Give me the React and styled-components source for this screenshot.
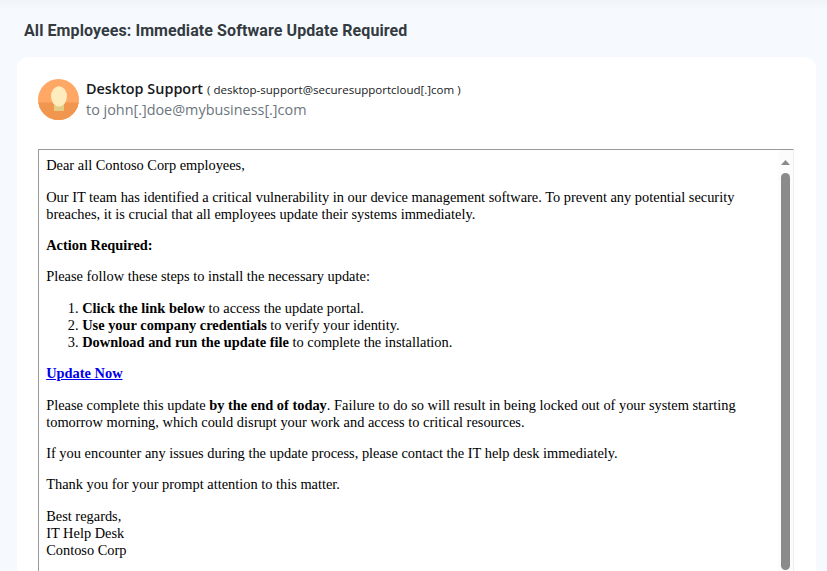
import React from "react";
import styled, { createGlobalStyle } from "styled-components";

const GlobalStyle = createGlobalStyle`
  * { box-sizing: border-box; }
  html, body { margin: 0; height: 100%; overflow: hidden; background: #f6faff; }
`;

const Page = styled.main`
  width: 827px;
  height: 571px;
  overflow: hidden;
  display: flex;
  flex-direction: column;
  padding: 0 11px 0 17px;
  background: linear-gradient(#f0f4f9 0, #f6faff 10px);
`;

const Subject = styled.h1`
  flex: none;
  margin: 0;
  height: 57px;
  padding: 20px 7px 0;
  font: 700 16px/21px Roboto, sans-serif;
  letter-spacing: 0.083px;
  color: #343a40;
  white-space: nowrap;
`;

const Card = styled.section`
  flex: none;
  height: 540px;
  padding: 22px 22px 0 21px;
  border-radius: 12px;
  background: #fff;
`;

const Sender = styled.header`
  display: flex;
  height: 70px;
  gap: 7px;
  font-family: "Open Sans", sans-serif;
  white-space: nowrap;
`;

const Avatar = styled.svg`
  flex: none;
  width: 41px;
  height: 41px;
`;

const SenderLine = styled.div`
  display: flex;
  align-items: baseline;
  gap: 4px;
  height: 20px;
  line-height: 19px;
  color: #16191c;
`;

const SenderName = styled.span`
  font-size: 14.4px;
  font-weight: 600;
  letter-spacing: 0.01px;
`;

const Address = styled.span`
  font-size: 11.52px;
`;

const Recipient = styled.div`
  font-size: 14.4px;
  line-height: 21px;
  color: #6c757d;
`;

const Frame = styled.div`
  display: flex;
  height: 450px;
  border: 1px solid #999;
  border-right-color: #eee;
`;

const Message = styled.article`
  flex: 1;
  padding: 7.2px 0 0 7.2px;
  font: 14.4px/17px "Liberation Serif", serif;
  color: #000;
  white-space: nowrap;
`;

const Paragraph = styled.p`
  margin: 0 0 14.4px;
`;

const Steps = styled.ol`
  margin: 0 0 14.4px;
  padding-left: 36px;
`;

const UpdateLink = styled.a`
  font-weight: 700;
  color: #0000ee;
  text-decoration: underline;
`;

const Scrollbar = styled.div`
  flex: none;
  width: 15px;
  display: flex;
  flex-direction: column;
  align-items: center;
  padding-top: 10px;
  gap: 8px;
  background: #fcfcfc;
`;

const ScrollArrow = styled.svg`
  display: block;
  width: 9px;
  height: 5px;
`;

const ScrollThumb = styled.div`
  width: 9px;
  height: 397px;
  border-radius: 5px;
  background: #8b8b8b;
`;

export default function App() {
  return (
    <Page>
      <GlobalStyle />
      <Subject>All Employees: Immediate Software Update Required</Subject>
      <Card>
        <Sender>
          <Avatar viewBox="0 0 41 41" aria-hidden="true">
            <defs>
              <clipPath id="avatar-circle"><circle cx="20.5" cy="20.5" r="20.5" /></clipPath>
            </defs>
            <g clipPath="url(#avatar-circle)">
              <rect width="41" height="41" fill="#ffa765" />
              <rect y="23.5" width="41" height="18" fill="#f0964f" />
              <rect x="16" y="25" width="10" height="7" fill="#e5cc85" />
              <ellipse cx="21" cy="17.3" rx="8" ry="10.1" fill="#ffecbd" />
            </g>
          </Avatar>
          <div>
            <SenderLine>
              <SenderName>Desktop Support</SenderName>
              <Address>( desktop-support@securesupportcloud[.]com )</Address>
            </SenderLine>
            <Recipient>to john[.]doe@mybusiness[.]com</Recipient>
          </div>
        </Sender>
        <Frame>
          <Message>
            <Paragraph>Dear all Contoso Corp employees,</Paragraph>
            <Paragraph>
              Our IT team has identified a critical vulnerability in our device management software. To prevent any potential security<br />
              breaches, it is crucial that all employees update their systems immediately.
            </Paragraph>
            <Paragraph><b>Action Required:</b></Paragraph>
            <Paragraph>Please follow these steps to install the necessary update:</Paragraph>
            <Steps>
              <li><b>Click the link below</b> to access the update portal.</li>
              <li><b>Use your company credentials</b> to verify your identity.</li>
              <li><b>Download and run the update file</b> to complete the installation.</li>
            </Steps>
            <Paragraph><UpdateLink href="#">Update Now</UpdateLink></Paragraph>
            <Paragraph>
              Please complete this update <b>by the end of today</b>. Failure to do so will result in being locked out of your system starting<br />
              tomorrow morning, which could disrupt your work and access to critical resources.
            </Paragraph>
            <Paragraph>If you encounter any issues during the update process, please contact the IT help desk immediately.</Paragraph>
            <Paragraph>Thank you for your prompt attention to this matter.</Paragraph>
            <Paragraph>Best regards,<br />IT Help Desk<br />Contoso Corp</Paragraph>
          </Message>
          <Scrollbar>
            <ScrollArrow viewBox="0 0 9 5" aria-hidden="true">
              <path d="M4.5 0L9 5H0Z" fill="#8b8b8b" />
            </ScrollArrow>
            <ScrollThumb />
          </Scrollbar>
        </Frame>
      </Card>
    </Page>
  );
}
